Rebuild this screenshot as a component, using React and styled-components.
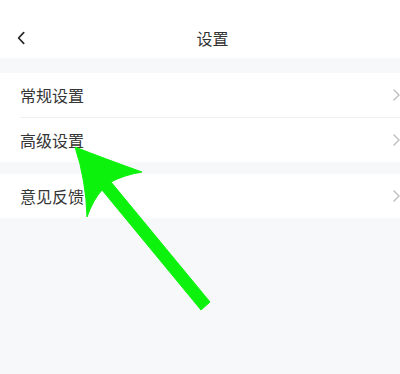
import React from 'react'
import styled, { createGlobalStyle } from 'styled-components'

const GlobalStyle = createGlobalStyle`
  html, body {
    margin: 0;
    padding: 0;
    background: #f7f8fa;
    overflow: hidden;
  }
  body {
    font-family: 'Noto Sans CJK SC', 'Noto Sans', sans-serif;
  }
`

const groups = [
  ['常规设置', '高级设置'],
  ['意见反馈'],
]

const App = () => {
  return (
    <>
      <GlobalStyle />
      <Page>
        <Header>
          <BackButton>
            <svg width="9" height="14" viewBox="0 0 9 14" fill="none">
              <path d="M7.5 1 L1.8 7 L7.5 13" stroke="#2b2b2b" strokeWidth="2" strokeLinecap="round" strokeLinejoin="round" />
            </svg>
          </BackButton>
          <Title>设置</Title>
        </Header>

        {groups.map((group, i) => (
          <Group key={i} $gap={i === 0 ? 15 : 12}>
            {group.map((label, j) => (
              <Row key={label} $last={j === group.length - 1}>
                <Label>{label}</Label>
                <Chevron>
                  <svg width="7" height="12" viewBox="0 0 7 12" fill="none">
                    <path d="M1 1 L6 6 L1 11" stroke="#bdbdbd" strokeWidth="1.4" strokeLinecap="round" strokeLinejoin="round" />
                  </svg>
                </Chevron>
              </Row>
            ))}
          </Group>
        ))}

        {/* green pointer drawn over the list */}
        <Arrow width="400" height="374" viewBox="0 0 400 374">
          <path
            d="M75 147 Q103 158 142 172 Q124 175 111 182 L210 302 L201 310 L102 190 Q93 200 87 217 Q86 180 75 147 Z"
            fill="#0df20d"
            stroke="#0df20d"
            strokeWidth="1"
            strokeLinejoin="round"
          />
        </Arrow>
      </Page>
    </>
  )
}

const Page = styled.div`
  position: relative;
  width: 400px;
  height: 374px;
  background: #f7f8fa;
`

const Header = styled.div`
  display: flex;
  align-items: center;
  height: 58px;
  box-sizing: border-box;
  padding: 18px 0 0 17px;
  background: #fff;
`

const BackButton = styled.div`
  display: flex;
  align-items: center;
  width: 8px;
  height: 40px;
`

const Title = styled.div`
  flex: 1;
  text-align: center;
  font-size: 16px;
  line-height: 40px;
  color: #333;
`

const Group = styled.div`
  margin-top: ${p => p.$gap}px;
  background: #fff;
`

const Row = styled.div`
  display: flex;
  align-items: center;
  justify-content: space-between;
  height: 44px;
  margin-left: 20px;
  border-bottom: ${p => (p.$last ? 'none' : '1px solid #f0f0f0')};
`

const Label = styled.div`
  font-size: 16px;
  color: #353535;
`

const Chevron = styled.div`
  display: flex;
  align-items: center;
`

const Arrow = styled.svg`
  position: absolute;
  left: 0;
  top: 0;
  pointer-events: none;
`

export default App
